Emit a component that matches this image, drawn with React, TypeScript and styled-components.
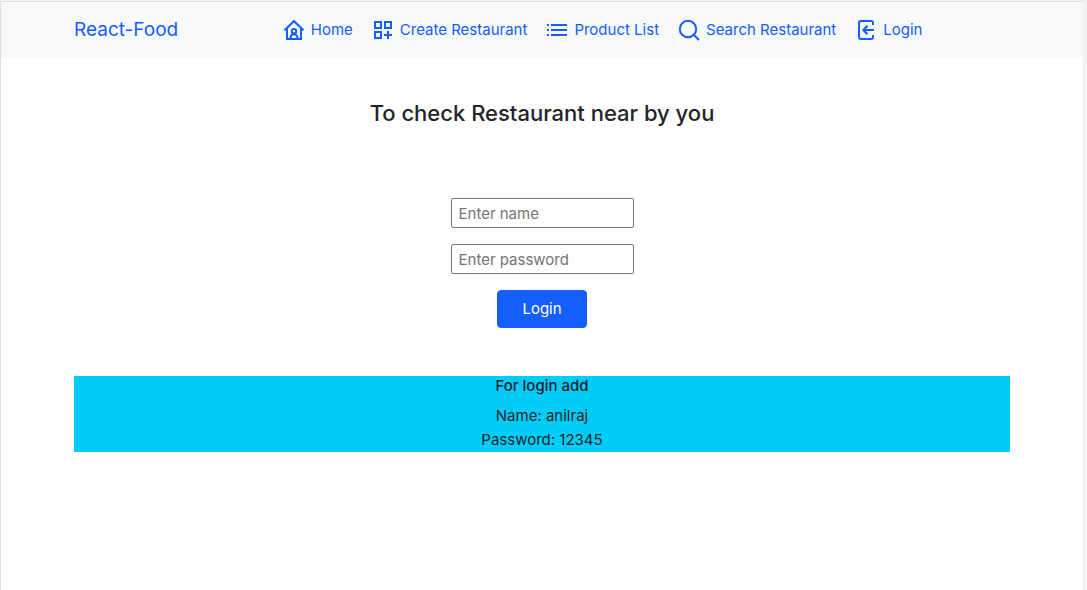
import type { ReactNode } from "react";
import styled, { createGlobalStyle } from "styled-components";

const GlobalStyle = createGlobalStyle`
  *, *::before, *::after { box-sizing: border-box; }
  html { background: #f1f2f4; }
  body {
    margin: 0;
    font-family: Inter, "Liberation Sans", sans-serif;
    font-size: 15px;
    line-height: 24px;
    color: #212529;
  }
`;

const Page = styled.div`
  min-height: calc(100vh - 1px);
  margin: 1px 4px 0 0;
  background: #fff;
  border-top: 1px solid #dee0e2;
  border-left: 1px solid #dee0e2;
`;

const Container = styled.div`
  width: 100%;
  max-width: 960px;
  margin: 0 auto;
  padding: 0 12px;
`;

const Header = styled.header`
  background: #f8f9fb;
  padding: 8px 0;
`;

const Bar = styled(Container)`
  display: flex;
  align-items: center;
`;

const Brand = styled.a`
  margin-right: 16px;
  padding: 5px 0;
  font-size: 19px;
  line-height: 30px;
  color: #145dff;
  text-decoration: none;
`;

const Nav = styled.nav`
  display: flex;
  margin: 0 auto;
`;

const NavLink = styled.a`
  display: flex;
  align-items: center;
  gap: 5px;
  padding: 8px 9px;
  color: #145dff;
  text-decoration: none;
  white-space: nowrap;
`;

const Glyph = styled.svg`
  width: 24px;
  height: 24px;
  flex: none;
  fill: none;
  stroke: currentColor;
  stroke-width: 2;
`;

const Main = styled(Container).attrs({ as: "main" })`
  text-align: center;
`;

const Title = styled.h1`
  margin: 40px 0 0;
  font-size: 22px;
  line-height: 30px;
  font-weight: 500;
`;

const Form = styled.form`
  display: flex;
  flex-direction: column;
  align-items: center;
  gap: 16px;
  margin: 70px 0 48px;
`;

const Field = styled.input`
  display: block;
  width: 183px;
  height: 30px;
  padding: 1px 7px;
  border: 1px solid #767676;
  border-radius: 2px;
  background: #fff;
  font: inherit;
  color: inherit;

  &::placeholder { color: #757575; opacity: 1; }
`;

const Submit = styled.button`
  padding: 6px 24px;
  border: 1px solid #145dff;
  border-radius: 4px;
  background: #145dff;
  color: #fff;
  font: inherit;
  cursor: pointer;
`;

const Hint = styled.section`
  background: #00ccfa;
`;

const HintTitle = styled.h2`
  margin: 0 0 8px;
  font-size: 15px;
  line-height: 20px;
  font-weight: 500;
`;

const HintLine = styled.p`
  margin: 0;
`;

const Icon = ({ children }: { children: ReactNode }) => (
  <Glyph viewBox="0 0 24 24" aria-hidden="true">{children}</Glyph>
);

const links = [
  {
    label: "Home",
    icon: (
      <>
        <path d="M2.4 12.2 12 3.2l9.6 9" />
        <path d="M5 10.5V21h14V10.5" />
        <circle cx="12" cy="13.2" r="2.2" />
        <path d="M8.6 21v-1.4a3.4 3.4 0 0 1 6.8 0V21" />
      </>
    ),
  },
  {
    label: "Create Restaurant",
    icon: (
      <path d="M4 4h6v6H4zM14 4h6v6h-6zM4 14h6v6H4zM17 13v8M13 17h8" />
    ),
  },
  {
    label: "Product List",
    icon: (
      <>
        <path d="M6 7h16M6 12h16M6 17h16" />
        <path d="M2 7h2M2 12h2M2 17h2" />
      </>
    ),
  },
  {
    label: "Search Restaurant",
    icon: (
      <>
        <circle cx="11" cy="11" r="8.2" />
        <path d="m17 17 5 5" />
      </>
    ),
  },
  {
    label: "Login",
    icon: (
      <>
        <path d="M19 7V5a2 2 0 0 0-2-2H7a2 2 0 0 0-2 2v14a2 2 0 0 0 2 2h10a2 2 0 0 0 2-2v-2" />
        <path d="M20 12H9.6M13.5 7.8 9.3 12l4.2 4.2" />
      </>
    ),
  },
];

export default function App() {
  return (
    <Page>
      <GlobalStyle />
      <Header>
        <Bar>
          <Brand href="#">React-Food</Brand>
          <Nav>
            {links.map(({ label, icon }) => (
              <NavLink key={label} href="#">
                <Icon>{icon}</Icon>
                {label}
              </NavLink>
            ))}
          </Nav>
        </Bar>
      </Header>
      <Main>
        <Title>To check Restaurant near by you</Title>
        <Form onSubmit={(event) => event.preventDefault()}>
          <Field type="text" name="name" placeholder="Enter name" aria-label="Name" />
          <Field type="password" name="password" placeholder="Enter password" aria-label="Password" />
          <Submit type="submit">Login</Submit>
        </Form>
        <Hint>
          <HintTitle>For login add</HintTitle>
          <HintLine>Name: anilraj</HintLine>
          <HintLine>Password: 12345</HintLine>
        </Hint>
      </Main>
    </Page>
  );
}
